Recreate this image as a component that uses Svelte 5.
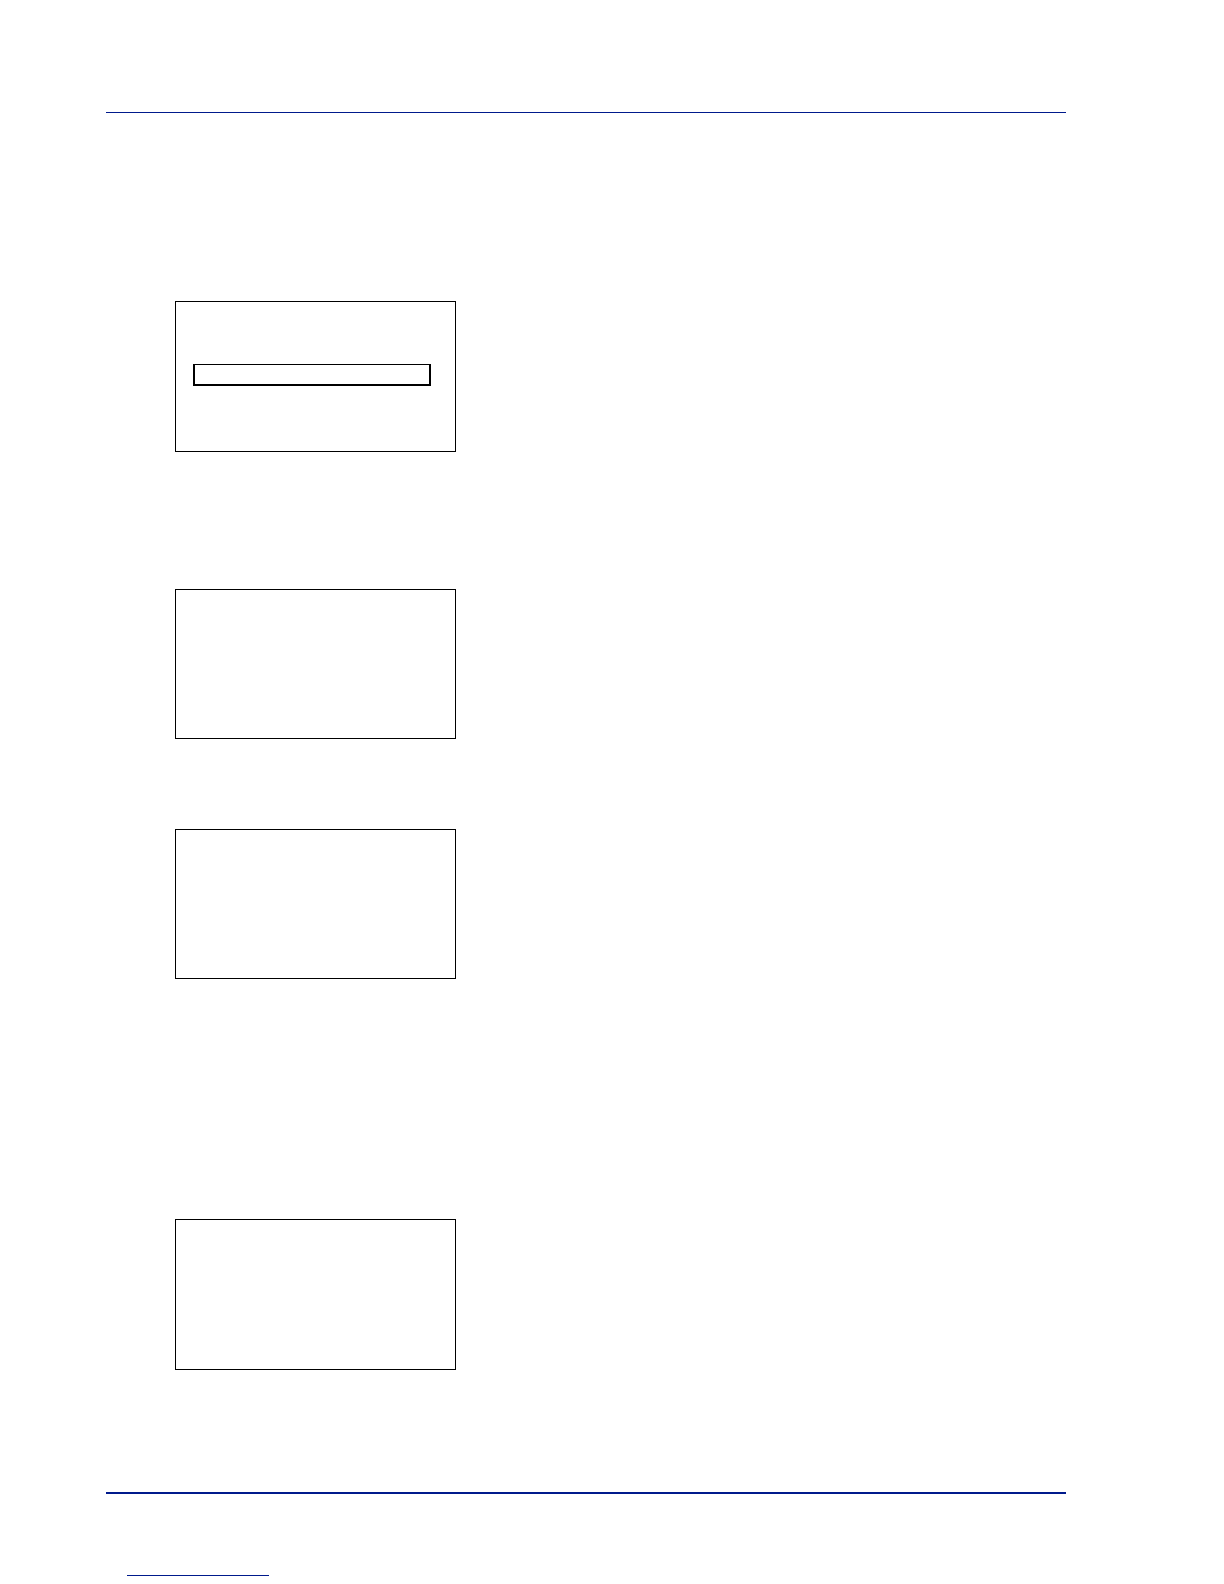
<script lang="ts">
  interface Panel {
    space: string;
    tall?: boolean;
    selected?: boolean;
  }

  const panels: Panel[] = [
    { space: 'intro', tall: true, selected: true },
    { space: 'step' },
    { space: 'next' },
    { space: 'section', tall: true }
  ];
</script>

<div class="page">
  <header class="page-header"></header>

  <main class="content">
    {#each panels as panel}
      <section class={panel.space}>
        <div class="display" class:tall={panel.tall}>
          {#if panel.selected}
            <div class="selection"></div>
          {/if}
        </div>
      </section>
    {/each}
  </main>

  <footer class="page-footer">
    <div class="underline"></div>
  </footer>
</div>

<style>
  :global(body) {
    margin: 0;
    background: #ffffff;
    font-family: "Liberation Sans", Arial, sans-serif;
  }
  .page {
    box-sizing: border-box;
    padding: 112px 158px 8px 106px;
  }
  .page-header {
    border-top: 1px solid #001a8c;
  }
  .content {
    padding: 0 0 122px 69px;
  }
  .intro {
    padding-top: 188px;
  }
  .step {
    padding-top: 137px;
  }
  .next {
    padding-top: 90px;
  }
  .section {
    padding-top: 240px;
  }
  .display {
    box-sizing: border-box;
    max-width: 281px;
    min-height: 150px;
    padding: 62px 24px 0 17px;
    border: 1px solid #000000;
  }
  .tall {
    min-height: 151px;
  }
  .selection {
    box-sizing: border-box;
    height: 22px;
    border: 2px solid #000000;
    border-top-width: 1px;
  }
  .page-footer {
    padding: 81px 0 0 21px;
    border-top: 2px solid #001a8c;
  }
  .underline {
    max-width: 142px;
    border-top: 1px solid #001a8c;
  }
</style>
